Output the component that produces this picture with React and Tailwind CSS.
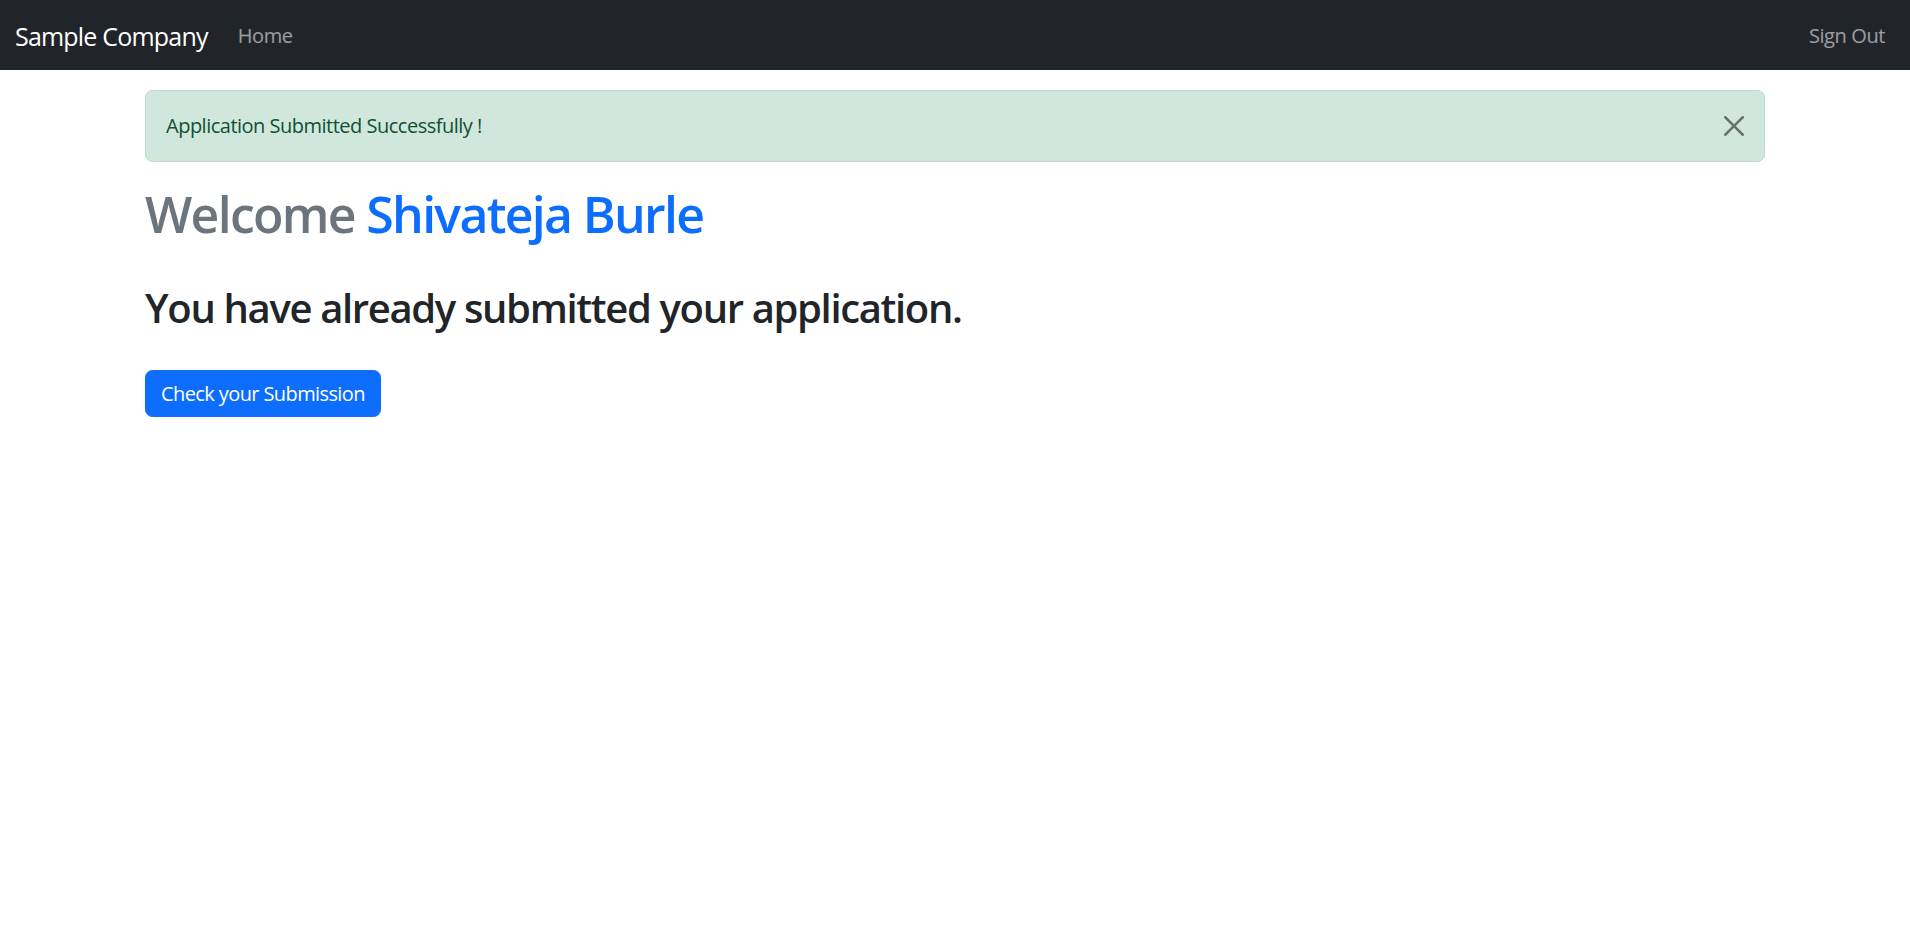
import React from 'react';

const FONT = "font-['Segoe_UI','Open_Sans','Noto_Sans',sans-serif]";

const CloseIcon = () => (
  <svg viewBox="0 0 16 16" width="20" height="20" fill="currentColor">
    <path d="M.293.293a1 1 0 0 1 1.414 0L8 6.586 14.293.293a1 1 0 1 1 1.414 1.414L9.414 8l6.293 6.293a1 1 0 0 1-1.414 1.414L8 9.414l-6.293 6.293a1 1 0 0 1-1.414-1.414L6.586 8 .293 1.707a1 1 0 0 1 0-1.414z" />
  </svg>
);

export default function App() {
  return (
    <div className={`min-h-screen bg-white ${FONT}`}>
      {/* navbar */}
      <nav className="h-[70px] bg-[#212529] flex items-center justify-between px-[15px] pt-[2px]">
        <div className="flex items-center">
          <a className="text-[25px] leading-[37px] text-white mr-[20px] tracking-[-0.8px]">Sample Company</a>
          <a className="px-[10px] text-[20px] leading-[30px] text-white/55 tracking-[-0.4px]">Home</a>
        </div>
        <a className="px-[10px] text-[20px] leading-[30px] text-white/55 tracking-[-0.4px]">Sign Out</a>
      </nav>

      <main className="w-[1650px] mx-auto px-[15px]">
        {/* alert */}
        <div className="relative mt-[20px] mb-[22px] border border-[#badbcc] bg-[#d1e7dd] text-[#0f5132] rounded-[7.5px] py-[20px] pl-[20px] pr-[80px] text-[20px] leading-[30px] tracking-[-0.5px]">
          Application Submitted Successfully !
          <button className="absolute right-0 top-0 px-[20px] py-[25px] text-black opacity-50">
            <CloseIcon />
          </button>
        </div>

        <h1 className="text-[50px] leading-[60px] font-semibold mb-[10px] tracking-[-1.7px]">
          <span className="text-[#6c757d]">Welcome</span>{' '}
          <span className="text-[#0d6efd]">Shivateja Burle</span>
        </h1>

        <h2 className="mt-[40px] mb-[38px] text-[40px] leading-[48px] font-semibold text-[#212529] tracking-[-1.35px]">
          You have already submitted your application.
        </h2>

        <button className="h-[47px] px-[15px] rounded-[7.5px] bg-[#0d6efd] border border-[#0d6efd] text-white text-[20px] leading-[30px] tracking-[-0.6px]">
          Check your Submission
        </button>
      </main>
    </div>
  );
}
